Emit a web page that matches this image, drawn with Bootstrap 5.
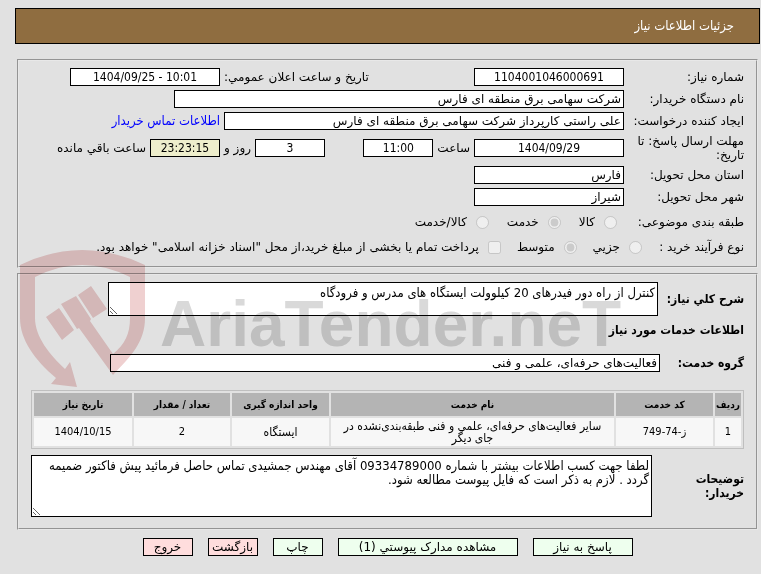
<!DOCTYPE html>
<html lang="fa" dir="rtl">
<head>
<meta charset="utf-8">
<meta name="viewport" content="width=device-width, initial-scale=1">
<title>جزئیات اطلاعات نیاز</title>
<link rel="stylesheet" href="https://cdn.jsdelivr.net/npm/bootstrap@5.3.0/dist/css/bootstrap.min.css">
<style>
body{background:#e1e1e1;color:#000;font-family:"DejaVu Sans",sans-serif;font-size:12px;line-height:14px}
.page{padding:8px 1px 8px 15px}
.titlebar{background:#8f6d40;border:1px solid #000;color:#fff;height:36px;padding:0 25px;margin-bottom:15px}
.titlebar h1{font-family:"DejaVu Sans Condensed","DejaVu Sans",sans-serif;font-size:13px;line-height:16px}
.panel{border:2px groove #e8e8e8;margin:0 2px 5px}
.panel-info{padding:7px 12px 6px}
.panel-need{padding:7px 12px 11px;margin-bottom:8px}
.line{min-height:18px;margin-bottom:4px}
.line-tall{min-height:28px}
.line-kind{min-height:24px}
.lbl{width:120px;flex:none;padding-left:8px}
.lbl-process{width:102px}
.box{border:1px solid #000;border-radius:0;background:#fff;color:#000;height:18px;padding:0 2px;font:inherit;line-height:16px;min-width:0}
.w70{width:70px}.w150{width:150px}.w400{width:400px}.w450{width:450px}.w550{width:550px}
.num{text-align:center;font-family:"DejaVu Sans Condensed","DejaVu Sans",sans-serif;font-size:12px}
.timer{background:#eeeecc}
.side{width:254px;flex:none}
.contact{color:#00f;text-decoration:none}
.contact,.memo{font-family:"DejaVu Sans Condensed","DejaVu Sans",sans-serif;font-size:13px}
.pick{width:13px;height:13px;margin:0;flex:none}
.opt{gap:9px}
.kinds{gap:18px;margin-right:7px}
.steps{gap:16px}
.strong-lbl,.sec{font-family:"DejaVu Sans Condensed","DejaVu Sans",sans-serif;font-size:12px;line-height:14px;font-weight:bold}
.strong-lbl{width:84px;flex:none}
.strong-lbl-desc{width:86px}
.strong-lbl-wide{width:92px;padding-left:20px}
.sec{margin:0 0 10px;padding:7px 0}
.memo{height:34px;padding:3px 2px;line-height:14px}
.memo-tall{height:62px}
.services{border:1px solid #bfbfbf;border-collapse:separate;border-spacing:2px;table-layout:fixed;text-align:center;margin:18px 0 6px;font-family:"DejaVu Sans Condensed","DejaVu Sans",sans-serif;font-size:11px;line-height:12px}
.services th{background:#b4b4b4;height:23px;padding:0;font-size:10px}
.services td{background:#f7f7f7;height:28px;padding:2px 6px}
.services .words{font-size:12px}
.c-row{width:26px}.c-code{width:97px}.c-unit{width:97px}.c-qty{width:96px}.c-date{width:98px}
.acts{gap:15px}
.act{border:1px solid #000;border-radius:0;height:18px;padding:0;font:inherit;color:#000;line-height:16px}
.act-go{background:#eeffee}.act-back{background:#ffdddd}
.w50{width:50px}.w100{width:100px}.w180{width:180px}
.logo-layer{left:0;top:240px;pointer-events:none;mix-blend-mode:multiply}
.logo-layer text{font-family:"Liberation Sans",sans-serif;font-weight:bold;font-size:64px}
</style>
<script src="https://cdn.jsdelivr.net/npm/bootstrap@5.3.0/dist/js/bootstrap.bundle.min.js"></script>
</head>
<body>
<main class="page position-relative">
<header class="titlebar d-flex align-items-center"><h1 class="m-0 fw-normal">جزئیات اطلاعات نیاز</h1></header>

<section class="panel panel-info">
  <div class="line d-flex align-items-center">
    <label class="lbl" for="no">شماره نیاز:</label>
    <input class="box num w150" id="no" value="1104001046000691" readonly>
    <span class="side d-flex justify-content-end ps-1"><label for="pub">تاریخ و ساعت اعلان عمومي:</label></span>
    <input class="box num w150" id="pub" dir="ltr" value="1404/09/25 - 10:01" readonly>
  </div>
  <div class="line d-flex align-items-center">
    <label class="lbl" for="org">نام دستگاه خریدار:</label>
    <input class="box w450" id="org" value="شرکت سهامی برق منطقه ای فارس" readonly>
  </div>
  <div class="line d-flex align-items-center">
    <label class="lbl text-nowrap" for="by">ایجاد کننده درخواست:</label>
    <input class="box w400" id="by" value="علی راستی کارپرداز شرکت سهامی برق منطقه ای فارس" readonly>
    <a class="contact me-1" href="#contact">اطلاعات تماس خریدار</a>
  </div>
  <div class="line line-tall d-flex align-items-center">
    <label class="lbl" for="dl">مهلت ارسال پاسخ: تا تاریخ:</label>
    <input class="box num w150" id="dl" value="1404/09/29" readonly>
    <span class="side d-flex align-items-center justify-content-between">
      <span class="d-flex align-items-center"><label class="mx-1" for="hr">ساعت</label><input class="box num w70" id="hr" value="11:00" readonly></span>
      <span class="d-flex align-items-center"><input class="box num w70" id="days" value="3" readonly><label class="mx-1" for="days">روز و</label></span>
    </span>
    <input class="box num w70 timer" id="left" value="23:23:15" readonly>
    <label class="me-1 text-nowrap" for="left">ساعت باقي مانده</label>
  </div>
  <div class="line d-flex align-items-center">
    <label class="lbl" for="prov">استان محل تحویل:</label>
    <input class="box w150" id="prov" value="فارس" readonly>
  </div>
  <div class="line d-flex align-items-center">
    <label class="lbl" for="city">شهر محل تحویل:</label>
    <input class="box w150" id="city" value="شیراز" readonly>
  </div>
  <div class="line line-kind d-flex align-items-center">
    <span class="lbl text-nowrap">طبقه بندی موضوعی:</span>
    <div class="kinds d-flex">
      <span class="opt d-flex align-items-center"><input type="radio" class="pick" name="kind" id="k1" disabled><label for="k1">کالا</label></span>
      <span class="opt d-flex align-items-center"><input type="radio" class="pick" name="kind" id="k2" checked disabled><label for="k2">خدمت</label></span>
      <span class="opt d-flex align-items-center"><input type="radio" class="pick" name="kind" id="k3" disabled><label for="k3">کالا/خدمت</label></span>
    </div>
  </div>
  <div class="line d-flex align-items-center">
    <span class="lbl lbl-process text-nowrap">نوع فرآیند خرید :</span>
    <div class="steps d-flex">
      <span class="opt d-flex align-items-center"><input type="radio" class="pick" name="step" id="s1" disabled><label for="s1">جزیي</label></span>
      <span class="opt d-flex align-items-center"><input type="radio" class="pick" name="step" id="s2" checked disabled><label for="s2">متوسط</label></span>
      <span class="opt d-flex align-items-center"><input type="checkbox" class="pick" id="pay" disabled><label class="text-nowrap" for="pay">پرداخت تمام یا بخشی از مبلغ خرید،از محل "اسناد خزانه اسلامی" خواهد بود.</label></span>
    </div>
  </div>
</section>

<section class="panel panel-need">
  <div class="d-flex align-items-center">
    <label class="strong-lbl strong-lbl-desc text-nowrap" for="desc">شرح کلي نیاز:</label>
    <textarea class="box memo w550" id="desc" readonly>کنترل از راه دور فیدرهای 20 کیلوولت ایستگاه های مدرس و فرودگاه</textarea>
  </div>
  <h2 class="sec">اطلاعات خدمات مورد نیاز</h2>
  <div class="d-flex align-items-center">
    <label class="strong-lbl" for="grp">گروه خدمت:</label>
    <input class="box w550" id="grp" value="فعالیت‌های حرفه‌ای، علمی و فنی" readonly>
  </div>
  <table class="services w-100">
    <thead><tr><th class="c-row">ردیف</th><th class="c-code">کد خدمت</th><th>نام خدمت</th><th class="c-unit">واحد اندازه گیری</th><th class="c-qty">تعداد / مقدار</th><th class="c-date">تاریخ نیاز</th></tr></thead>
    <tbody><tr><td>1</td><td>ز-74-749</td><td class="words">سایر فعالیت‌های حرفه‌ای، علمی و فنی طبقه‌بندی‌نشده در جای دیگر</td><td class="words">ایستگاه</td><td>2</td><td>1404/10/15</td></tr></tbody>
  </table>
  <div class="d-flex align-items-center">
    <label class="strong-lbl strong-lbl-wide" for="notes">توضیحات خریدار:</label>
    <textarea class="box memo memo-tall flex-grow-1" id="notes" readonly>لطفا جهت کسب اطلاعات بیشتر با شماره 09334789000 آقای مهندس جمشیدی تماس حاصل فرمائید پیش فاکتور ضمیمه گردد . لازم به ذکر است که فایل پیوست مطالعه شود.</textarea>
  </div>
</section>

<div class="acts d-flex justify-content-center">
  <button type="button" class="act act-go w100">پاسخ به نیاز</button>
  <button type="button" class="act act-go w180">مشاهده مدارک پیوستي (1)</button>
  <button type="button" class="act act-go w50">چاپ</button>
  <button type="button" class="act act-back w50">بازگشت</button>
  <button type="button" class="act act-back w50">خروج</button>
</div>

<svg class="logo-layer position-absolute" width="640" height="160" viewBox="0 240 640 160" direction="ltr" aria-hidden="true">
  <g fill="#efd0d0">
    <path fill-rule="evenodd" d="M20 265Q82 235 145 265V318C145 342 131 356 113 375L79 328L77 329L61 304L76 296L91 319L90 321L113 354C125 344 130 334 130 318V277Q82 253 35 277V318C35 337 50 355 65 369L70 362L77 387L51 384L56 378C35 360 20 340 20 318Z"/>
    <path d="M46 317L59 308L74 330L62 340ZM78 295L91 286L107 309L93 318Z"/>
  </g>
  <text x="160" y="346" fill="#d9d9d9">AriaTender.neT</text>
</svg>
</main>
</body>
</html>
